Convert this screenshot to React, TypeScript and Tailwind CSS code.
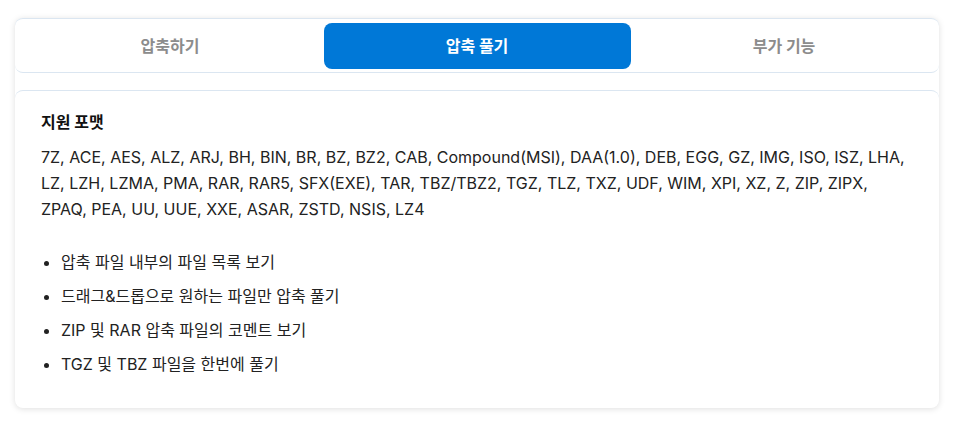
import React from "react";

const tabs = ["압축하기", "압축 풀기", "부가 기능"];

const features = [
  "압축 파일 내부의 파일 목록 보기",
  "드래그&드롭으로 원하는 파일만 압축 풀기",
  "ZIP 및 RAR 압축 파일의 코멘트 보기",
  "TGZ 및 TBZ 파일을 한번에 풀기",
];

const formats =
  "7Z, ACE, AES, ALZ, ARJ, BH, BIN, BR, BZ, BZ2, CAB, Compound(MSI), DAA(1.0), DEB, EGG, GZ, IMG, ISO, ISZ, LHA, LZ, LZH, LZMA, PMA, RAR, RAR5, SFX(EXE), TAR, TBZ/TBZ2, TGZ, TLZ, TXZ, UDF, WIM, XPI, XZ, Z, ZIP, ZIPX, ZPAQ, PEA, UU, UUE, XXE, ASAR, ZSTD, NSIS, LZ4";

const App: React.FC = () => {
  const active = 1;
  return (
    <div
      className="w-[954px] h-[422px] bg-white pt-[18px] px-[15px]"
      style={{ fontFamily: 'Inter, "Noto Sans CJK KR", sans-serif' }}
    >
      <div className="w-[924px] bg-white rounded-lg shadow-[0_1px_6px_rgba(0,0,0,0.13)]">
        <div className="grid grid-cols-3 h-[55px] px-[1.5px] pt-[4px] pb-[3px] border-y border-[#dbe6f1] rounded-lg">
          {tabs.map((t, i) => (
            <button
              key={t}
              className={
                i === active
                  ? "rounded-lg bg-[#0078d7] text-white text-[16px] font-bold"
                  : "rounded-lg text-[#8c8c8c] text-[16px] font-bold"
              }
            >
              {t}
            </button>
          ))}
        </div>
        <div className="mt-[17px] border-t border-[#dbe6f1] rounded-t-lg px-[26px] pt-[18px] pb-[27px] text-[#222]">
          <h3 className="text-[16px] font-bold leading-[26px] text-[#111]">지원 포맷</h3>
          <p className="mt-[9px] text-[16px] leading-[26px]">{formats}</p>
          <ul className="mt-[23px] list-disc pl-[20px] text-[16px] leading-[26px]">
            {features.map((f) => (
              <li key={f} className="py-[4px]">
                {f}
              </li>
            ))}
          </ul>
        </div>
      </div>
    </div>
  );
};

export default App;
